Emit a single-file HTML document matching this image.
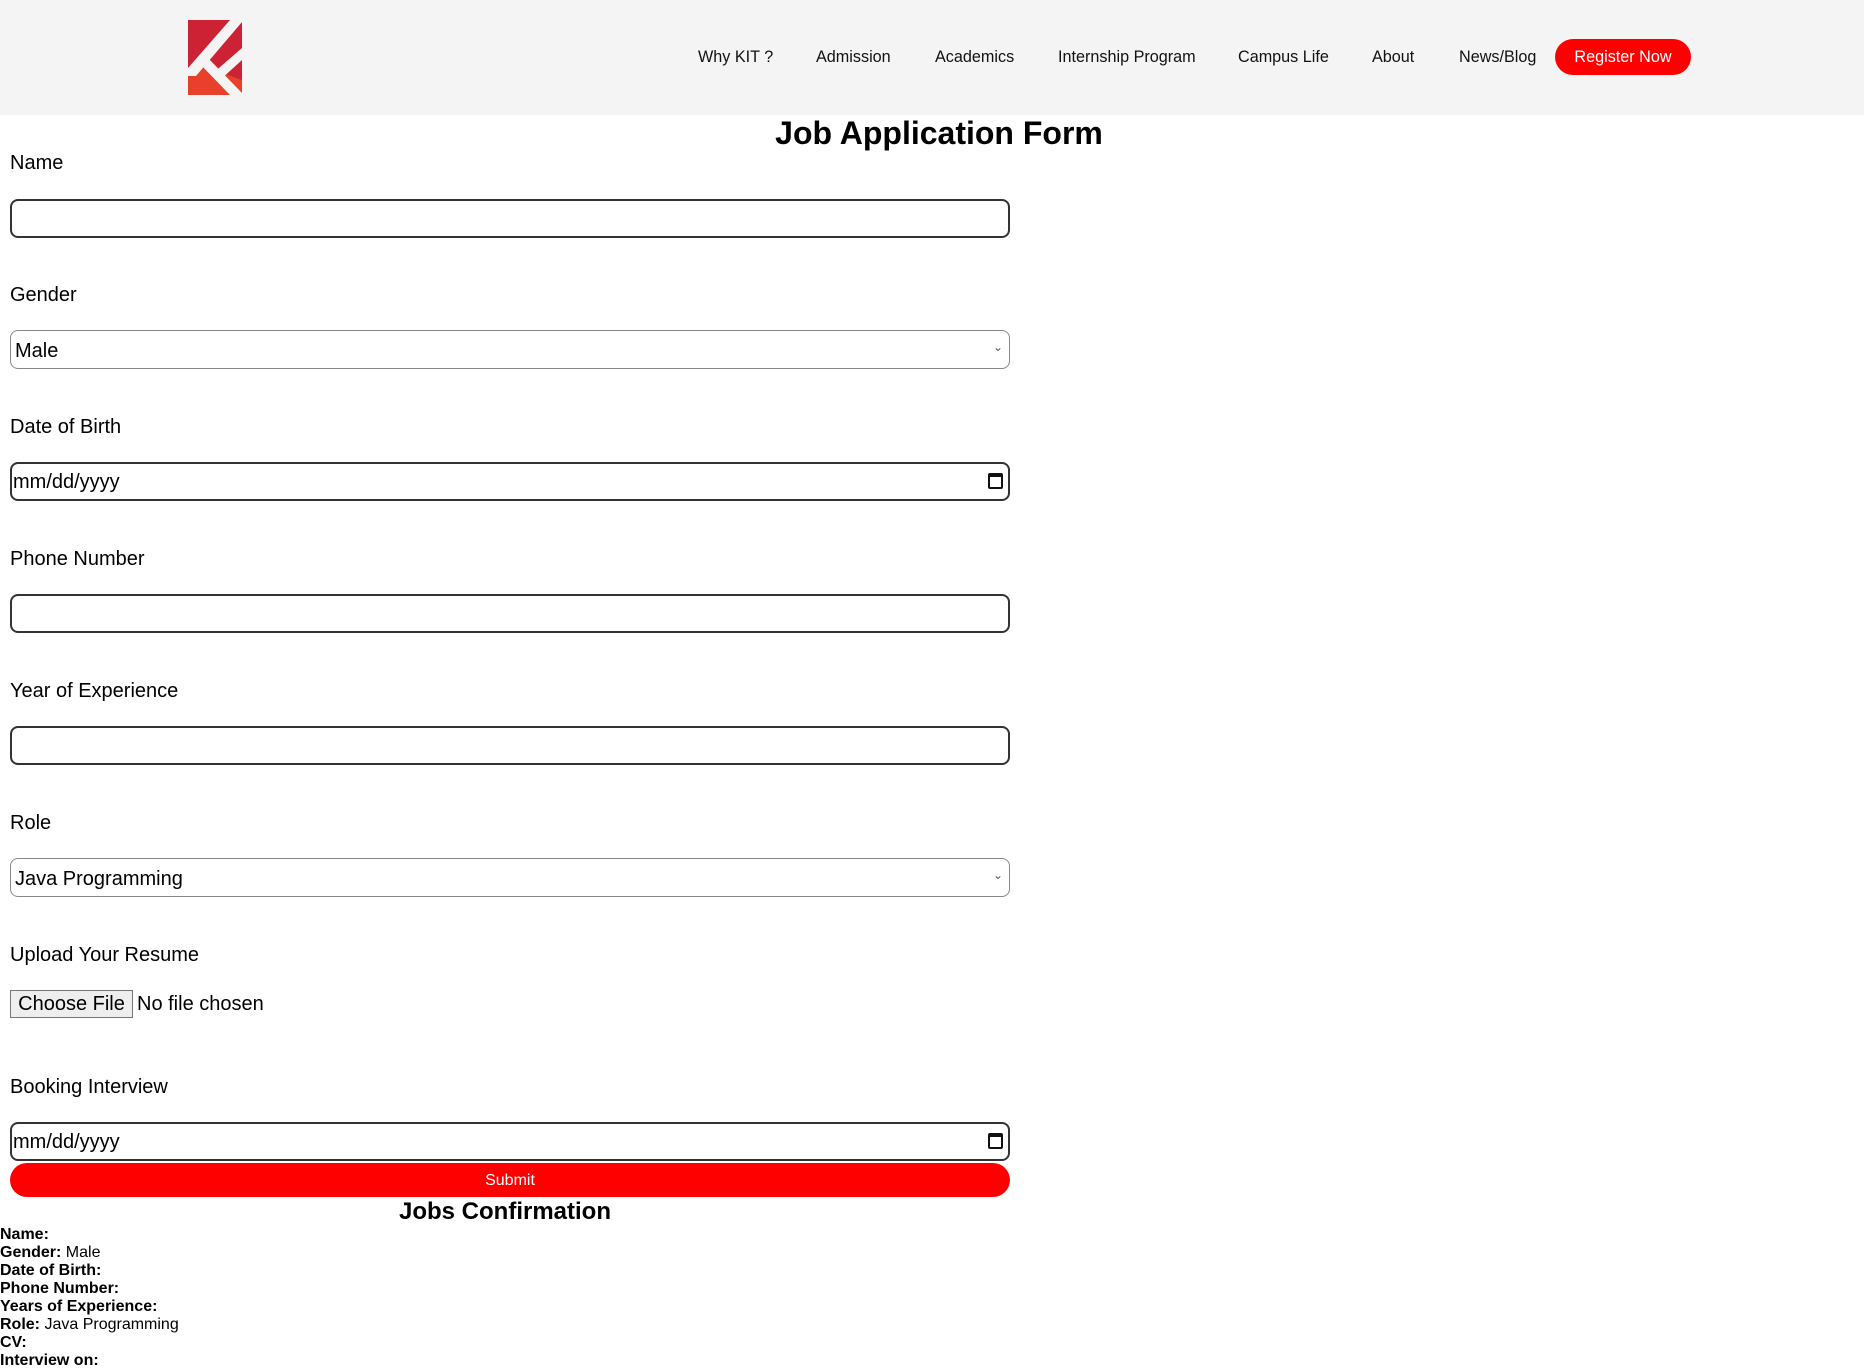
<!DOCTYPE html>
<html><head><meta charset="utf-8"><style>
*{margin:0;padding:0;box-sizing:border-box}
body{width:1864px;height:1370px;background:#fff;font-family:"Liberation Sans",Arial,sans-serif;color:#000;position:relative;overflow:hidden}
.hdr{position:absolute;left:0;top:0;width:1864px;height:115px;background:#f4f4f4}
.nav{position:absolute;top:48px;font-size:16.2px;color:#111}
.reg{position:absolute;left:1555px;top:39px;width:136px;height:36px;border-radius:18px;background:#ff0000;color:#fff;font-size:16.2px;text-align:center;line-height:37px}
h1{position:absolute;left:0;width:1878px;text-align:center;top:115px;font-size:32px;font-weight:bold}
.lbl{position:absolute;left:10px;font-size:20px}
.in{position:absolute;left:10px;width:1000px;height:39px;border:2px solid #333;border-radius:8px;background:#fff}
.sel{position:absolute;left:10px;width:1000px;height:39px;border:1px solid #888;border-radius:8px;background:#fff;font-size:20px;padding:9px 0 0 4px}
.sel span.ch{position:absolute;right:6px;top:9px;font-size:12px;color:#555}
.dt{font-size:20px;padding:7px 0 0 1px}
.cal{position:absolute;right:5px;top:9px;width:15px;height:16px;border:2px solid #111;border-top-width:4px;border-radius:2px}
.btn{position:absolute;left:10px;top:990px;width:123px;height:28px;background:#eee;border:1px solid #777;font-size:20px;text-align:center;line-height:27px}
.sub{position:absolute;left:10px;top:1163px;width:1000px;height:34px;border-radius:17px;background:#ff0000;color:#fff;font-size:16px;text-align:center;line-height:35px}
h2{position:absolute;left:0;width:1010px;text-align:center;top:1198px;font-size:24px;font-weight:bold}
.c{position:absolute;left:0;font-size:16px;line-height:18px}
.c b{font-weight:bold}
</style></head><body>
<div class="hdr">
<svg style="position:absolute;left:188px;top:20px" width="54" height="75" viewBox="0 0 54 75">
<rect width="54" height="75" fill="#cc2233"/>
<path d="M0 56 L0 75 L54 75 L54 60 L10 44 Z" fill="#e8402a"/>
<path d="M42 0 L54 0 L54 2 L8 56 L0 56 L0 48 Z" fill="#f4f4f4"/>
<path d="M54 28 L54 40 L32 60 L24 54 Z" fill="#f4f4f4"/>
<path d="M12 44 L20 38 L56 75 L42 75 Z" fill="#f4f4f4"/>
</svg>
<div class="nav" style="left:698px">Why KIT ?</div>
<div class="nav" style="left:816px">Admission</div>
<div class="nav" style="left:935px">Academics</div>
<div class="nav" style="left:1058px">Internship Program</div>
<div class="nav" style="left:1238px">Campus Life</div>
<div class="nav" style="left:1372px">About</div>
<div class="nav" style="left:1459px">News/Blog</div>
<div class="reg">Register Now</div>
</div>
<h1>Job Application Form</h1>
<div class="lbl" style="top:152px">Name</div>
<div class="in" style="top:199px"></div>
<div class="lbl" style="top:284px">Gender</div>
<div class="sel" style="top:330px">Male<span class="ch">&#8964;</span></div>
<div class="lbl" style="top:416px">Date of Birth</div>
<div class="in dt" style="top:462px">mm/dd/yyyy<span class="cal"></span></div>
<div class="lbl" style="top:548px">Phone Number</div>
<div class="in" style="top:594px"></div>
<div class="lbl" style="top:680px">Year of Experience</div>
<div class="in" style="top:726px"></div>
<div class="lbl" style="top:812px">Role</div>
<div class="sel" style="top:858px">Java Programming<span class="ch">&#8964;</span></div>
<div class="lbl" style="top:944px">Upload Your Resume</div>
<div class="btn">Choose File</div>
<div class="lbl" style="left:137px;top:993px;font-size:20px">No file chosen</div>
<div class="lbl" style="top:1076px">Booking Interview</div>
<div class="in dt" style="top:1122px">mm/dd/yyyy<span class="cal"></span></div>
<div class="sub">Submit</div>
<h2>Jobs Confirmation</h2>
<div class="c" style="top:1226px"><b>Name:</b></div>
<div class="c" style="top:1244px"><b>Gender:</b> Male</div>
<div class="c" style="top:1262px"><b>Date of Birth:</b></div>
<div class="c" style="top:1280px"><b>Phone Number:</b></div>
<div class="c" style="top:1298px"><b>Years of Experience:</b></div>
<div class="c" style="top:1316px"><b>Role:</b> Java Programming</div>
<div class="c" style="top:1334px"><b>CV:</b></div>
<div class="c" style="top:1352px"><b>Interview on:</b></div>
</body></html>
